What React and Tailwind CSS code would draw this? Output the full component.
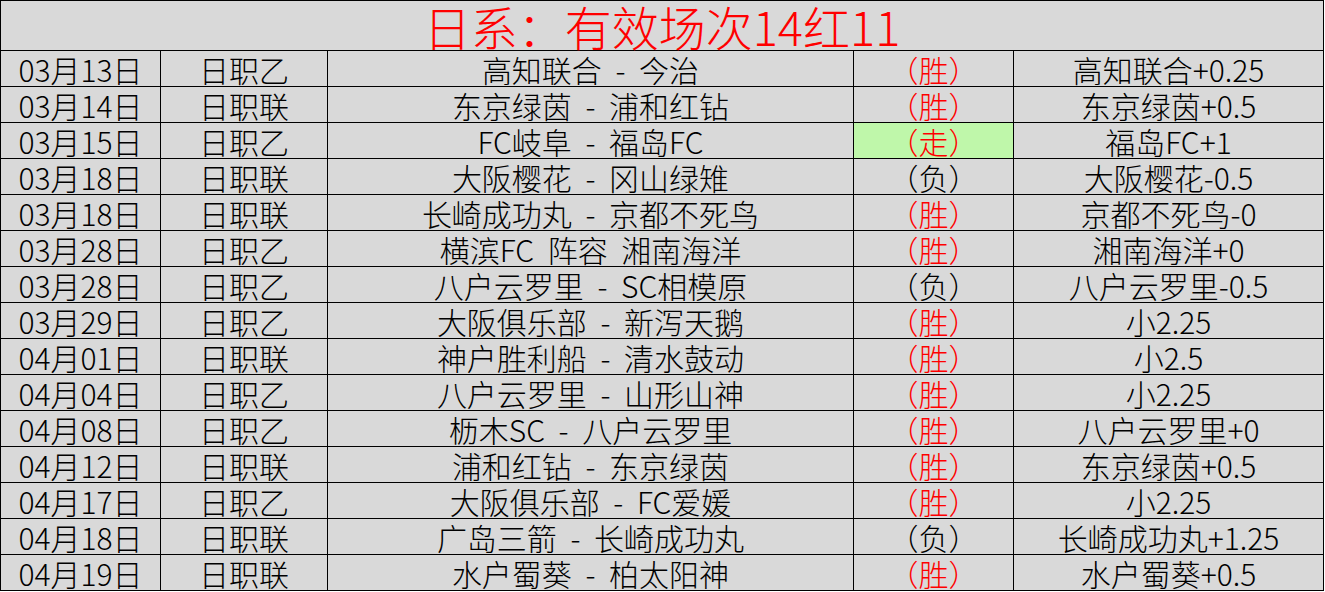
import React from 'react';

const rows = [
  ['03月13日', '日职乙', '高知联合 - 今治', '胜', '高知联合+0.25'],
  ['03月14日', '日职联', '东京绿茵 - 浦和红钻', '胜', '东京绿茵+0.5'],
  ['03月15日', '日职乙', 'FC岐阜 - 福岛FC', '走', '福岛FC+1'],
  ['03月18日', '日职联', '大阪樱花 - 冈山绿雉', '负', '大阪樱花-0.5'],
  ['03月18日', '日职联', '长崎成功丸 - 京都不死鸟', '胜', '京都不死鸟-0'],
  ['03月28日', '日职乙', '横滨FC 阵容 湘南海洋', '胜', '湘南海洋+0'],
  ['03月28日', '日职乙', '八户云罗里 - SC相模原', '负', '八户云罗里-0.5'],
  ['03月29日', '日职乙', '大阪俱乐部 - 新泻天鹅', '胜', '小2.25'],
  ['04月01日', '日职联', '神户胜利船 - 清水鼓动', '胜', '小2.5'],
  ['04月04日', '日职乙', '八户云罗里 - 山形山神', '胜', '小2.25'],
  ['04月08日', '日职乙', '枥木SC - 八户云罗里', '胜', '八户云罗里+0'],
  ['04月12日', '日职联', '浦和红钻 - 东京绿茵', '胜', '东京绿茵+0.5'],
  ['04月17日', '日职乙', '大阪俱乐部 - FC爱媛', '胜', '小2.25'],
  ['04月18日', '日职联', '广岛三箭 - 长崎成功丸', '负', '长崎成功丸+1.25'],
  ['04月19日', '日职联', '水户蜀葵 - 柏太阳神', '胜', '水户蜀葵+0.5'],
];

// excel-ish grid, every cell bordered and centred
const cell = 'border border-black text-center p-0 leading-[34px] whitespace-nowrap';

export default function App() {
  return (
    <div className="w-[1325px] h-[592px] bg-white" style={{ fontFamily: '"Noto Sans CJK SC", "Noto Sans", sans-serif' }}>
      <table className="border-collapse bg-[#d9d9d9] text-black table-fixed w-[1323px] font-light">
        <colgroup>
          <col className="w-[160px]" />
          <col className="w-[167px]" />
          <col className="w-[526px]" />
          <col className="w-[160px]" />
          <col className="w-[310px]" />
        </colgroup>
        <tbody>
          <tr className="h-[50px]">
            <td colSpan={5} className="border border-black text-center p-0 leading-[48px] whitespace-nowrap text-[47px] text-[#ff0000]">
              日系：有效场次14红11
            </td>
          </tr>
          {rows.map((r, i) => (
            <tr key={i} className="h-[36px] text-[30px]">
              <td className={cell}>{r[0]}</td>
              <td className={cell}>{r[1]}</td>
              <td className={cell + ' [word-spacing:7px]'}>{r[2]}</td>
              <td className={cell + (r[3] === '走' ? ' bg-[#bff7aa]' : '') + (r[3] === '负' ? ' text-black' : ' text-[#ff0000]')}>
                （{r[3]}）
              </td>
              <td className={cell}>{r[4]}</td>
            </tr>
          ))}
        </tbody>
      </table>
    </div>
  );
}
